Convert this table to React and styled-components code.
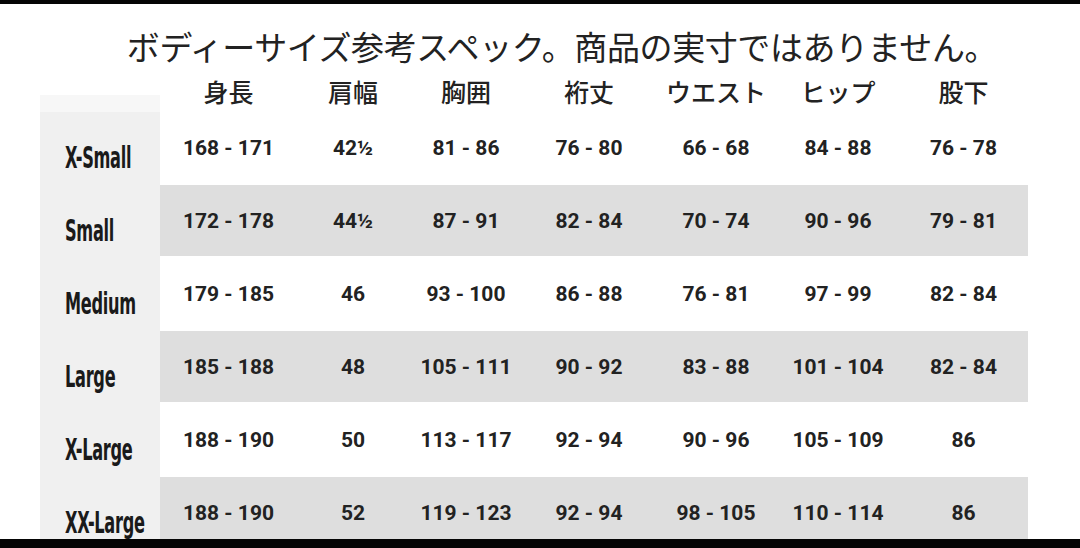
import React from 'react'
import styled, { createGlobalStyle } from 'styled-components'

const GlobalStyle = createGlobalStyle`
  html, body {
    margin: 0;
    padding: 0;
    background: #000;
  }
`

const columns = ['身長', '肩幅', '胸囲', '裄丈', 'ウエスト', 'ヒップ', '股下']

const sizes = [
  { name: 'X-Small', values: ['168 - 171', '42½', '81 - 86', '76 - 80', '66 - 68', '84 - 88', '76 - 78'] },
  { name: 'Small', values: ['172 - 178', '44½', '87 - 91', '82 - 84', '70 - 74', '90 - 96', '79 - 81'] },
  { name: 'Medium', values: ['179 - 185', '46', '93 - 100', '86 - 88', '76 - 81', '97 - 99', '82 - 84'] },
  { name: 'Large', values: ['185 - 188', '48', '105 - 111', '90 - 92', '83 - 88', '101 - 104', '82 - 84'] },
  { name: 'X-Large', values: ['188 - 190', '50', '113 - 117', '92 - 94', '90 - 96', '105 - 109', '86'] },
  { name: 'XX-Large', values: ['188 - 190', '52', '119 - 123', '92 - 94', '98 - 105', '110 - 114', '86'] },
]

const template = '120px 137px 112px 114px 132px 122px 122px 129px'

const Page = styled.div`
  width: 1080px;
  height: 548px;
  display: flex;
  flex-direction: column;
  overflow: hidden;
  background: #fff;
`

const TopBar = styled.div`
  height: 4px;
  flex: none;
  background: #050505;
`

const BottomBar = styled.div`
  height: 9px;
  flex: none;
  background: #050505;
`

const Main = styled.main`
  flex: 1;
  overflow: hidden;
  padding-left: 40px;
`

const Title = styled.h1`
  margin: 0;
  padding: 22px 0 0 4px;
  height: 40px;
  font-family: "Noto Sans CJK JP", sans-serif;
  font-weight: 400;
  font-size: 33px;
  line-height: 40px;
  color: #222;
  text-align: center;
  white-space: nowrap;
  letter-spacing: -0.4px;
`

const Row = styled.div`
  display: grid;
  grid-template-columns: ${template};
  height: ${p => (p.$head ? '46px' : '73px')};
`

const Corner = styled.div`
  align-self: end;
  height: 17px;
  background: #f7f7f7;
`

const HeadCell = styled.div`
  align-self: end;
  padding-bottom: 7px;
  font-family: "Noto Sans CJK JP", sans-serif;
  font-weight: 500;
  font-size: 25px;
  line-height: 28px;
  color: #222;
  text-align: center;
  white-space: nowrap;
`

const Label = styled.div`
  display: flex;
  align-items: center;
  padding: 18px 0 0 25px;
  background: #f0f0f0;
  white-space: nowrap;
  font-family: "Liberation Sans Narrow", "DejaVu Sans Condensed", "Roboto", sans-serif;
  font-weight: 700;
  font-size: 30px;
  letter-spacing: -0.5px;
  color: #1a1a1a;
`

const LabelText = styled.span`
  display: inline-block;
  transform: scaleX(0.6);
  transform-origin: left center;
`

const Cell = styled.div`
  display: flex;
  align-items: center;
  justify-content: center;
  margin-bottom: 2px;
  background: ${p => (p.$shaded ? '#dedede' : '#fff')};
  white-space: nowrap;
  font-family: "Roboto", "Liberation Sans", sans-serif;
  font-weight: 700;
  font-size: 21px;
  color: #222;
`

function App () {
  return (
    <Page>
      <GlobalStyle />
      <TopBar />
      <Main>
        <Title>ボディーサイズ参考スペック。商品の実寸ではありません。</Title>
        <Row $head>
          <Corner />
          {columns.map(c => (
            <HeadCell key={c}>{c}</HeadCell>
          ))}
        </Row>
        {sizes.map((s, i) => (
          <Row key={s.name}>
            <Label><LabelText>{s.name}</LabelText></Label>
            {s.values.map((v, j) => (
              <Cell key={j} $shaded={i % 2 === 1}>{v}</Cell>
            ))}
          </Row>
        ))}
      </Main>
      <BottomBar />
    </Page>
  )
}

export default App
